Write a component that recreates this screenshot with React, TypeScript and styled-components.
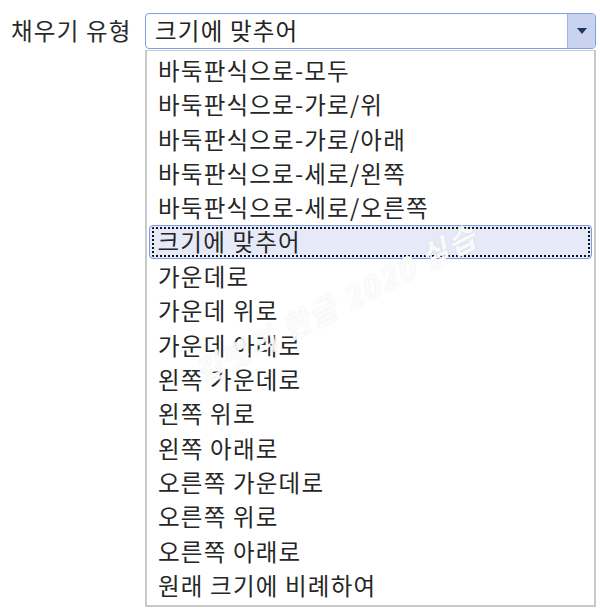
import React from "react";
import styled, { createGlobalStyle } from "styled-components";

const Global = createGlobalStyle`
  html, body { margin: 0; padding: 0; background: #fff; }
  body { font-family: "Noto Sans CJK KR", "Noto Sans", sans-serif; color: #222; }
`;

const Page = styled.div`
  width: 600px;
  height: 616px;
  position: relative;
  overflow: hidden;
  display: grid;
  grid-template-columns: 145px 451px;
  grid-template-rows: 36px auto;
  align-items: start;
  padding-top: 13px;
  box-sizing: border-box;
`;

const Label = styled.div`
  font-size: 23.5px;
  line-height: 34px;
  padding-left: 11px;
  color: #2a2a2a;
  white-space: nowrap;
  letter-spacing: 1.2px;
`;

const SelectBox = styled.div`
  display: flex;
  box-sizing: border-box;
  height: 36px;
  border: 1.5px solid #7f9fe4;
  border-radius: 4px;
  background: #fff;
  overflow: hidden;
`;

const SelectValue = styled.div`
  flex: 1;
  font-size: 23.5px;
  line-height: 32px;
  padding-left: 9px;
  color: #222;
  letter-spacing: 1.2px;
`;

const ArrowButton = styled.div`
  width: 27px;
  background: #c9d3f0;
  border-left: 1.5px solid #9eb3e6;
  display: flex;
  align-items: center;
  justify-content: center;
`;

const List = styled.ul`
  grid-column: 2;
  list-style: none;
  margin: 1px 0 0 0;
  padding: 2px 2px 2px 2px;
  box-sizing: border-box;
  width: 451px;
  border: 2px solid #c9c9c9;
  border-top-width: 1px;
  background: #fff;
`;

const Item = styled.li<{ $selected?: boolean }>`
  font-size: 23.5px;
  line-height: 34.35px;
  height: 34.35px;
  padding-left: 9px;
  box-sizing: border-box;
  white-space: nowrap;
  color: #262626;
  position: relative;
  letter-spacing: 1.2px;
  ${(p) =>
    p.$selected &&
    `
    background: #e6eaf8;
    border: 1.5px solid #7b9be2;
    border-radius: 4px;
    line-height: 30px;
    padding-left: 7.5px;
    &::after {
      content: "";
      position: absolute;
      inset: 1.5px;
      border: 2px dotted #111;
      border-radius: 2px;
    }
  `}
`;

const Watermark = styled.div`
  position: absolute;
  left: 196px;
  top: 352px;
  font-size: 30px;
  font-weight: 700;
  font-style: italic;
  color: rgba(255, 255, 255, 0.9);
  text-shadow: 0 0 1.5px rgba(170, 170, 170, 0.3);
  transform: rotate(-27deg);
  transform-origin: left center;
  white-space: nowrap;
  letter-spacing: 2px;
  pointer-events: none;
`;

const items = [
  "바둑판식으로-모두",
  "바둑판식으로-가로/위",
  "바둑판식으로-가로/아래",
  "바둑판식으로-세로/왼쪽",
  "바둑판식으로-세로/오른쪽",
  "크기에 맞추어",
  "가운데로",
  "가운데 위로",
  "가운데 아래로",
  "왼쪽 가운데로",
  "왼쪽 위로",
  "왼쪽 아래로",
  "오른쪽 가운데로",
  "오른쪽 위로",
  "오른쪽 아래로",
  "원래 크기에 비례하여",
];

export default function App() {
  return (
    <Page>
      <Global />
      <Label>채우기 유형</Label>
      <SelectBox>
        <SelectValue>크기에 맞추어</SelectValue>
        <ArrowButton>
          <svg width="10" height="6" viewBox="0 0 10 6">
            <path d="M0 0 L10 0 L5 6 Z" fill="#1f3566" />
          </svg>
        </ArrowButton>
      </SelectBox>
      <List>
        {items.map((t) => (
          <Item key={t} $selected={t === "크기에 맞추어"}>
            {t}
          </Item>
        ))}
      </List>
      <Watermark>길벗의 한글 2020 실습</Watermark>
    </Page>
  );
}
